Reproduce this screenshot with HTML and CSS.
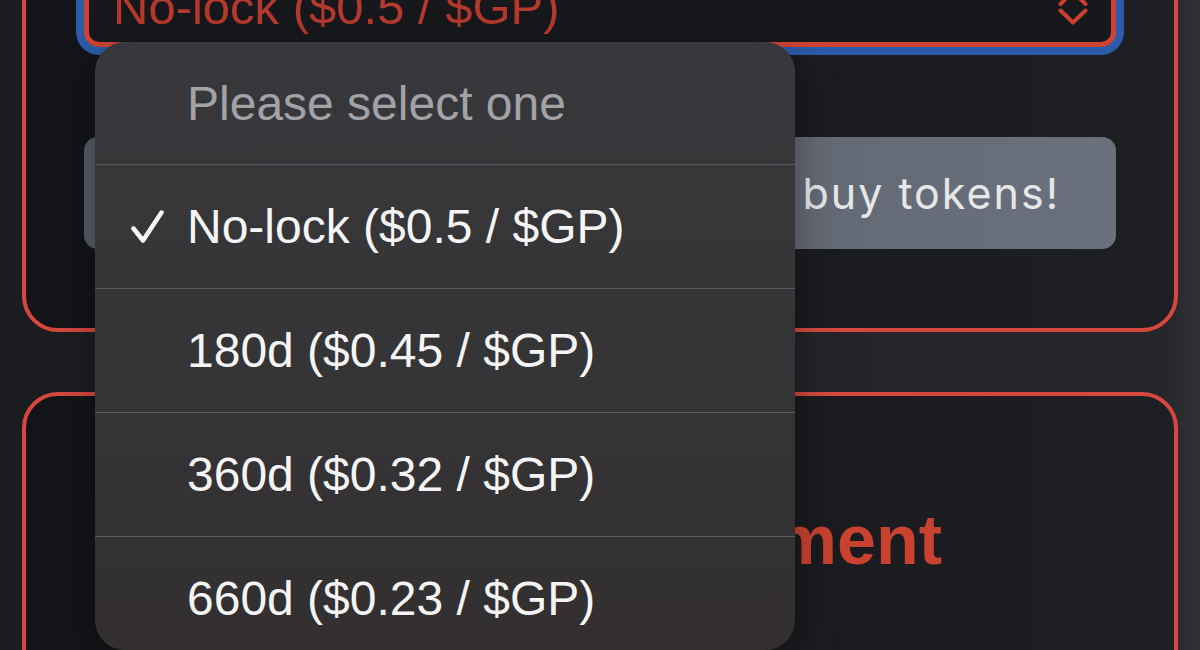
FILE: index.html
```html
<!DOCTYPE html>
<html lang="en">
<head>
<meta charset="utf-8">
<title>Buy $GP</title>
<link rel="stylesheet" href="styles.css">
</head>
<body>
<div class="page">
  <section class="card card-top">
    <div class="select">
      <span class="select-value">No-lock ($0.5 / $GP)</span>
      <svg class="select-icon" width="30" height="38" viewBox="0 0 30 38" aria-hidden="true">
        <path d="M2.5 16 L15 3.5 L27.5 16" />
        <path d="M2.5 22.5 L15 34.5 L27.5 22.5" />
      </svg>
    </div>
    <div class="buy-btn">Connect your wallet to buy tokens!</div>
  </section>
  <section class="card card-bottom">
    <h2 class="card-title">Your Investment</h2>
  </section>

  <div class="menu">
    <div class="menu-header">Please select one</div>
    <div class="option">
      <span class="check-slot">
        <svg width="34" height="34" viewBox="0 0 34 34" aria-hidden="true">
          <path d="M3.5 18.5 L13 30.5 L31.5 2.5" />
        </svg>
      </span>
      <span>No-lock ($0.5 / $GP)</span>
    </div>
    <div class="option"><span class="check-slot"></span><span>180d ($0.45 / $GP)</span></div>
    <div class="option"><span class="check-slot"></span><span>360d ($0.32 / $GP)</span></div>
    <div class="option"><span class="check-slot"></span><span>660d ($0.23 / $GP)</span></div>
  </div>
</div>
</body>
</html>
```

FILE: styles.css
```css
html, body {
  margin: 0;
  padding: 0;
}

body {
  width: 1200px;
  height: 650px;
  overflow: hidden;
  background: linear-gradient(90deg, #1b1c1f 0, #212226 30%, #25262a 97%, #2d2e32 99%, #303135 100%);
  font-family: "Liberation Sans", Arial, sans-serif;
}

.page {
  position: relative;
  display: flow-root;
  height: 650px;
  padding: 0 22px;
}

.card {
  border: 4px solid #d6483e;
  border-radius: 36px;
  background: linear-gradient(90deg, #131417 0, #18191c 50%, #1e1f23 100%);
}

.card-top {
  margin-top: -95px;
  padding: 58px 58px 79px;
}

.select {
  box-sizing: border-box;
  height: 80px;
  border: 5px solid #cf4336;
  border-radius: 15px;
  box-shadow: 0 0 0 8px #2d5ba9;
  background: #17181b;
  display: flex;
  align-items: center;
  justify-content: space-between;
  padding: 0 23px 0 24px;
  margin-bottom: 90px;
}

.select-value {
  font-size: 49px;
  color: #b5392d;
  line-height: 1;
}

.select-icon path {
  fill: none;
  stroke: #c9402f;
  stroke-width: 4;
  stroke-linecap: round;
  stroke-linejoin: round;
}

.buy-btn {
  height: 112px;
  border-radius: 14px;
  background: linear-gradient(90deg, #575e69 0, #626873 60%, #6b717c 100%);
  display: flex;
  align-items: center;
  justify-content: flex-end;
  padding-right: 56px;
  color: #e6e7ea;
  font-family: Inter, "Liberation Sans", sans-serif;
  font-size: 43px;
  letter-spacing: 2px;
  font-weight: 400;
}

.card-bottom {
  margin-top: 60px;
  height: 400px;
  padding: 109px 232px 0 30px;
}

.card-title {
  margin: 0;
  font-size: 70px;
  line-height: 1;
  font-weight: 700;
  color: #c9412f;
  text-align: right;
}

.menu {
  position: absolute;
  left: 95px;
  top: 42px;
  width: 700px;
  height: 608px;
  border-radius: 30px;
  overflow: hidden;
  background: linear-gradient(180deg, #38383c 0, #353537 50%, #332f30 100%);
  box-shadow: 0 12px 40px rgba(0, 0, 0, 0.35);
  font-size: 48px;
}

.menu-header {
  height: 122px;
  display: flex;
  align-items: center;
  padding-left: 92px;
  color: #a2a2a7;
}

.option {
  height: 123px;
  border-top: 1px solid #5a5a5e;
  display: flex;
  align-items: center;
  padding-left: 35px;
  color: #f5f5f5;
}

.check-slot {
  width: 57px;
  height: 34px;
  display: flex;
  align-items: center;
}

.check-slot path {
  fill: none;
  stroke: #f5f5f5;
  stroke-width: 4.5;
  stroke-linecap: round;
  stroke-linejoin: round;
}
```
